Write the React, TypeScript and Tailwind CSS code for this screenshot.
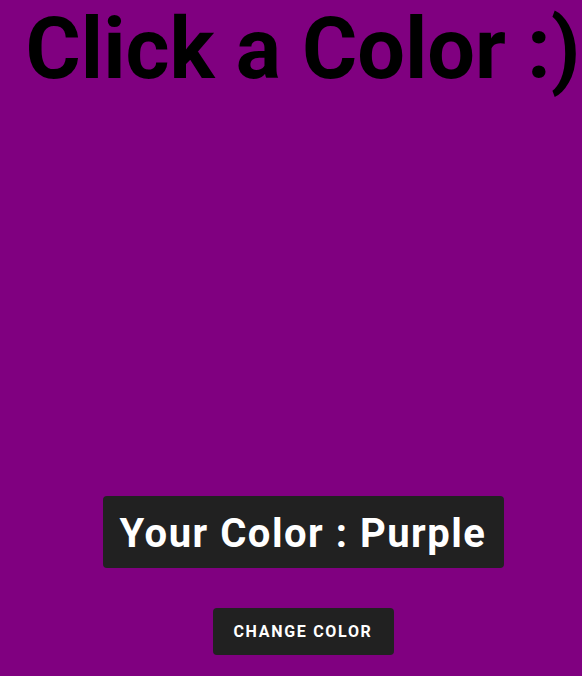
export default function App() {
  return (
    <div className="min-h-[676px] w-full bg-[#800080] pl-6 overflow-hidden" style={{ fontFamily: "Roboto, 'Liberation Sans', sans-serif" }}>
      <div className="flex flex-col items-center">
        <div className="h-[496px] flex justify-center">
          <h1 className="text-[84.5px] font-bold leading-none text-black whitespace-nowrap mt-[8px]">Click a Color :)</h1>
        </div>
        <div className="h-[72px] w-[401px] rounded bg-[#212121] flex items-center justify-center">
          <span className="text-[40px] font-bold text-white tracking-[1.5px] pt-[3px]">Your Color : Purple</span>
        </div>
        <button className="mt-[40px] h-[47px] w-[181px] rounded bg-[#212121] text-white text-[16px] font-bold uppercase tracking-[1.7px]">Change Color</button>
      </div>
    </div>
  );
}
